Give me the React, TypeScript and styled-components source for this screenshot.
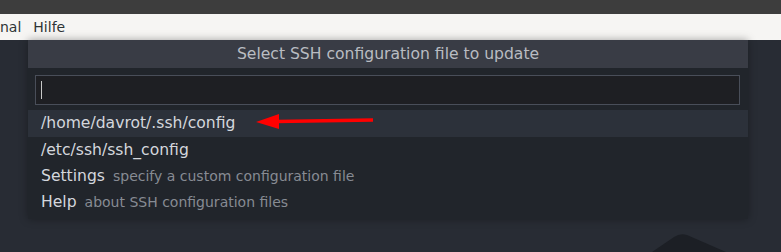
import React from "react";
import styled, { createGlobalStyle } from "styled-components";

const GlobalStyle = createGlobalStyle`
	html, body {
		margin: 0;
		padding: 0;
		background: #282c34;
		font-family: "DejaVu Sans", "Noto Sans", sans-serif;
		overflow: hidden;
	}
`;

const Screen = styled.div`
	position: relative;
	width: 781px;
	height: 252px;
	overflow: hidden;
	background: #282c34;
`;

const TitleStrip = styled.div`
	height: 14px;
	background: #3d3d3d;
`;

const MenuBar = styled.ul`
	display: flex;
	align-items: center;
	gap: 12px;
	height: 26px;
	margin: 0;
	padding: 0;
	list-style: none;
	background: #f6f5f3;
	& li {
		font-size: 14px;
		color: #2e3436;
	}
`;

const Workspace = styled.div`
	position: relative;
	display: flex;
	padding-left: 28px;
`;

const Panel = styled.div`
	position: relative;
	width: 720px;
	padding-bottom: 4px;
	background: #21252b;
	box-shadow: 0 0 8px rgba(0, 0, 0, 0.35);
`;

const PanelTitle = styled.div`
	height: 28px;
	line-height: 28px;
	text-align: center;
	font-size: 15.6px;
	color: #b9bcc2;
	background: #393c45;
`;

const InputWrap = styled.div`
	padding: 7px 8px 5px 7px;
`;

const InputBox = styled.div`
	height: 28px;
	background: #1e1f23;
	border: 1px solid #494e59;
	display: flex;
	align-items: center;
	padding-left: 5px;
`;

const Caret = styled.span`
	width: 1px;
	height: 18px;
	background: #c8c8c8;
`;

const List = styled.ul`
	margin: 0;
	padding: 0;
	list-style: none;
`;

const Row = styled.li<{ $active?: boolean }>`
	display: flex;
	align-items: baseline;
	gap: 8px;
	height: 26px;
	line-height: 26px;
	padding-left: 13px;
	background: ${(p) => (p.$active ? "#2c313a" : "transparent")};
	&:first-child {
		height: 27px;
		line-height: 27px;
	}
`;

const Label = styled.span`
	font-size: 15.6px;
	color: #d4d7dd;
`;

const Detail = styled.span`
	font-size: 14px;
	color: #878b93;
`;

const Arrow = styled.svg`
	position: absolute;
	left: 226px;
	top: 72px;
`;

const Backdrop = styled.svg`
	position: absolute;
	left: 640px;
	top: 230px;
`;

const items = [
	{ label: "/home/davrot/.ssh/config", active: true },
	{ label: "/etc/ssh/ssh_config" },
	{ label: "Settings", detail: "specify a custom configuration file" },
	{ label: "Help", detail: "about SSH configuration files" },
];

const App = () => {
	return (
		<Screen>
			<GlobalStyle />
			<Backdrop width="100" height="22" viewBox="0 0 100 22">
				<path d="M12 22 L34 7 Q40 3 47 5 L86 22 Z" fill="#1c1f25" />
			</Backdrop>
			<TitleStrip />
			<MenuBar>
				<li>nal</li>
				<li>Hilfe</li>
			</MenuBar>
			<Workspace>
				<Panel>
					<PanelTitle>Select SSH configuration file to update</PanelTitle>
					<InputWrap>
						<InputBox>
							<Caret />
						</InputBox>
					</InputWrap>
					<List>
						{items.map((it) => (
							<Row key={it.label} $active={it.active}>
								<Label>{it.label}</Label>
								{it.detail && <Detail>{it.detail}</Detail>}
							</Row>
						))}
					</List>
					<Arrow width="122" height="20" viewBox="0 0 122 20">
						<line x1="22" y1="9.5" x2="119" y2="8" stroke="#ff0000" strokeWidth="3.5" />
						<polygon points="2,10 25,2 25,17" fill="#ff0000" />
					</Arrow>
				</Panel>
			</Workspace>
		</Screen>
	);
};

export default App;
